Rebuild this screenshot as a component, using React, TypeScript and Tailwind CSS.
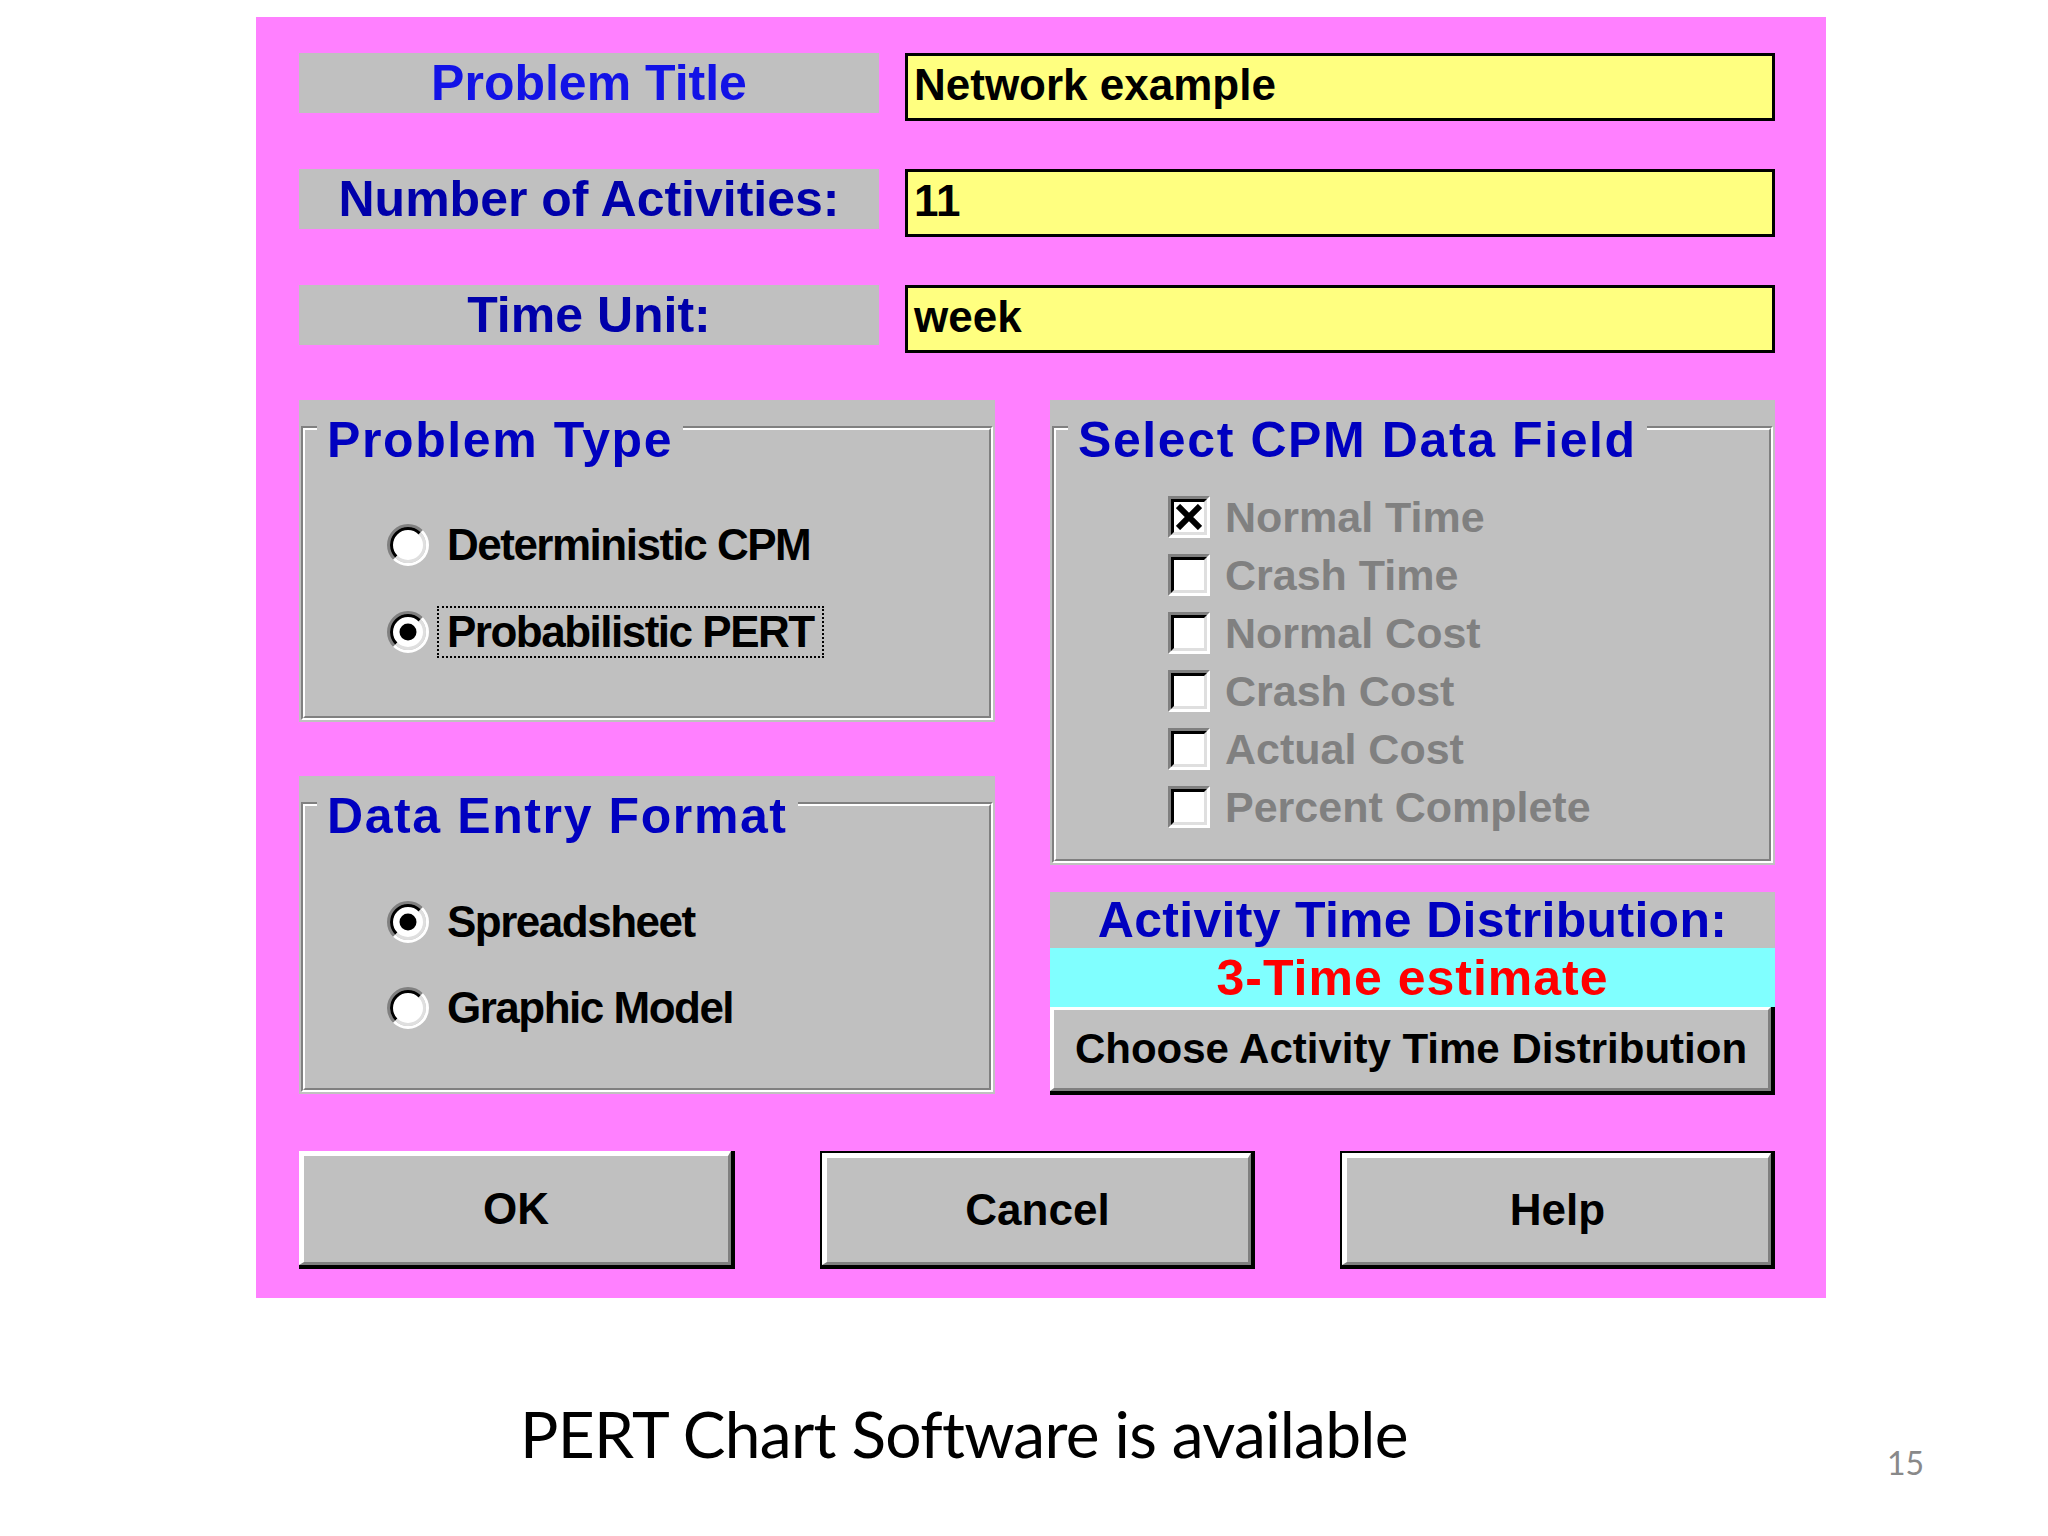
import React from "react";

const DLG = "font-['Liberation_Sans',Arial,sans-serif] font-bold";

function Radio({ checked }: { checked?: boolean }) {
  return (
    <svg width="42" height="42" viewBox="0 0 42 42" className="shrink-0">
      <circle cx="21" cy="21" r="15.5" fill="#ffffff" />
      <path d="M7.21 34.79A19.5 19.5 0 0 1 34.79 7.21" fill="none" stroke="#808080" strokeWidth="3" />
      <path d="M34.79 7.21A19.5 19.5 0 0 1 7.21 34.79" fill="none" stroke="#ffffff" strokeWidth="3" />
      <path d="M9.33 32.67A16.5 16.5 0 0 1 32.67 9.33" fill="none" stroke="#000000" strokeWidth="3" />
      <path d="M32.67 9.33A16.5 16.5 0 0 1 9.33 32.67" fill="none" stroke="#dfdfdf" strokeWidth="3" />
      {checked && <circle cx="21" cy="21" r="8.5" fill="#000000" />}
    </svg>
  );
}

function RadioRow({ label, checked, focus }: { label: string; checked?: boolean; focus?: boolean }) {
  return (
    <div className="flex h-[52px] items-center">
      <Radio checked={checked} />
      <span
        className={`ml-[8px] flex h-[52px] items-center border-2 border-dotted px-[8px] text-[44px] leading-none tracking-[-1.5px] text-black ${
          focus ? "border-black" : "border-transparent"
        }`}
      >
        {label}
      </span>
    </div>
  );
}

function Check({ checked }: { checked?: boolean }) {
  return (
    <div className="h-[42px] w-[42px] shrink-0 border-[3px] border-t-[#808080] border-l-[#808080] border-r-white border-b-white">
      <div className="flex h-full w-full items-center justify-center border-[3px] border-t-black border-l-black border-r-[#dfdfdf] border-b-[#dfdfdf] bg-white">
        {checked && (
          <svg width="26" height="26" viewBox="0 0 26 26">
            <path d="M2 2L24 24M24 2L2 24" stroke="#000000" strokeWidth="6" />
          </svg>
        )}
      </div>
    </div>
  );
}

function CheckRow({ label, checked }: { label: string; checked?: boolean }) {
  return (
    <div className="flex h-[58px] items-center">
      <Check checked={checked} />
      <span className="ml-[15px] text-[43px] leading-none text-[#808080]">{label}</span>
    </div>
  );
}

function GroupBox({ title, heightClass, children }: { title: string; heightClass: string; children: React.ReactNode }) {
  return (
    <div className={`relative flex flex-col bg-[#c0c0c0] px-[2px] pt-[26px] pb-[2px] ${heightClass}`}>
      <div className="flex-1 border-2 border-t-[#808080] border-l-[#808080] border-r-white border-b-white">
        <div className="h-full border-2 border-t-white border-l-white border-r-[#808080] border-b-[#808080]">
          {children}
        </div>
      </div>
      <span className="absolute top-[15px] left-[18px] bg-[#c0c0c0] px-[10px] text-[50px] leading-none tracking-[1.6px] text-[#0000c0]">
        {title}
      </span>
    </div>
  );
}

function Btn({ label, widthClass, outline }: { label: string; widthClass: string; outline?: boolean }) {
  return (
    <div
      className={`h-[118px] border-r-4 border-b-4 border-black ${widthClass} ${outline ? "border-t-2 border-l-2" : ""}`}
    >
      <div className="flex h-full items-center justify-center border-t-[5px] border-l-[5px] border-r-[3px] border-b-[3px] border-t-white border-l-white border-r-[#808080] border-b-[#808080] bg-[#c0c0c0] text-[44px] leading-none text-black">
        {label}
      </div>
    </div>
  );
}

function FieldRow({ label, value, labelColor }: { label: string; value: string; labelColor: string }) {
  return (
    <div className="flex h-[68px] items-start gap-[26px]">
      <div
        className={`flex h-[60px] w-[580px] items-center justify-center bg-[#c0c0c0] text-[50px] leading-none ${labelColor}`}
      >
        {label}
      </div>
      <div className="flex h-[68px] flex-1 items-center border-[3px] border-black bg-[#ffff80] pb-[4px] pl-[6px] text-[44px] leading-none text-black">
        {value}
      </div>
    </div>
  );
}

export default function App() {
  return (
    <div className="h-[1536px] w-[2048px] overflow-hidden bg-white pt-[17px]">
      <div className={`ml-[256px] h-[1281px] w-[1570px] bg-[#ff80ff] pt-[36px] pr-[51px] pl-[43px] ${DLG}`}>
        <div className="flex flex-col gap-[48px]">
          <FieldRow label="Problem Title" value="Network example" labelColor="text-[#1212e6]" />
          <FieldRow label="Number of Activities:" value="11" labelColor="text-[#0000aa]" />
          <FieldRow label="Time Unit:" value="week" labelColor="text-[#0000aa]" />
        </div>

        <div className="mt-[47px] flex gap-[55px]">
          <div className="flex w-[696px] flex-col gap-[54px]">
            <GroupBox title="Problem Type" heightClass="h-[322px]">
              <div className="flex flex-col gap-[35px] pt-[89px] pl-[82px]">
                <RadioRow label="Deterministic CPM" />
                <RadioRow label="Probabilistic PERT" checked focus />
              </div>
            </GroupBox>
            <GroupBox title="Data Entry Format" heightClass="h-[318px]">
              <div className="flex flex-col gap-[34px] pt-[90px] pl-[82px]">
                <RadioRow label="Spreadsheet" checked />
                <RadioRow label="Graphic Model" />
              </div>
            </GroupBox>
          </div>

          <div className="flex w-[725px] flex-col gap-[27px]">
            <GroupBox title="Select CPM Data Field" heightClass="h-[465px]">
              <div className="flex flex-col pt-[58px] pl-[112px]">
                <CheckRow label="Normal Time" checked />
                <CheckRow label="Crash Time" />
                <CheckRow label="Normal Cost" />
                <CheckRow label="Crash Cost" />
                <CheckRow label="Actual Cost" />
                <CheckRow label="Percent Complete" />
              </div>
            </GroupBox>
            <div className="flex flex-col">
              <div className="flex h-[56px] items-center justify-center bg-[#c0c0c0] text-[50px] leading-none tracking-[0.3px] text-[#0000c0]">
                Activity Time Distribution:
              </div>
              <div className="flex h-[59px] items-center justify-center bg-[#80ffff] text-[50px] leading-none tracking-[1px] text-[#ff0000]">
                3-Time estimate
              </div>
              <div className="h-[88px] border-r-4 border-b-4 border-black">
                <div className="flex h-full items-center justify-center border-t-[3px] border-l-[4px] border-r-[3px] border-b-[3px] border-t-white border-l-white border-r-[#808080] border-b-[#808080] bg-[#c0c0c0] text-[42px] leading-none text-black">
                  Choose Activity Time Distribution
                </div>
              </div>
            </div>
          </div>
        </div>

        <div className="mt-[56px] flex gap-[85px]">
          <Btn label="OK" widthClass="w-[436px]" />
          <Btn label="Cancel" widthClass="w-[435px]" outline />
          <Btn label="Help" widthClass="w-[435px]" outline />
        </div>
      </div>

      <div className="mt-[104px] flex items-start">
        <div className="ml-[520px] font-['Lato','Open_Sans',sans-serif] text-[64px] leading-none tracking-[-0.7px] text-black">
          PERT Chart Software is available
        </div>
        <div className="mt-[45px] mr-[124px] ml-auto font-['Lato','Open_Sans',sans-serif] text-[32px] leading-none text-[#898989]">
          15
        </div>
      </div>
    </div>
  );
}
